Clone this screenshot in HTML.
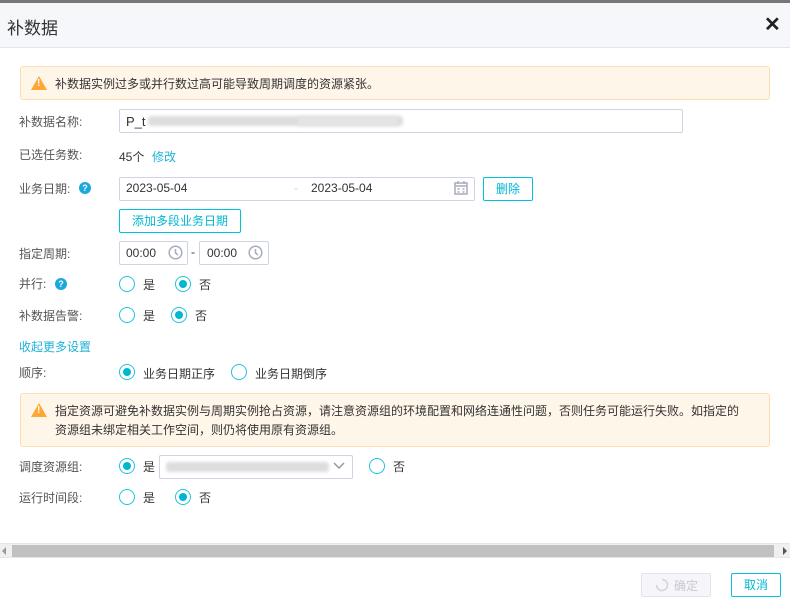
<!DOCTYPE html>
<html><head><meta charset="utf-8"><style>
*{margin:0;padding:0;box-sizing:border-box}
body{width:790px;height:608px;position:relative;background:#fff;font-family:"Liberation Sans","Noto Sans CJK SC",sans-serif;font-size:12px;color:#333;overflow:hidden}
.a{position:absolute;white-space:nowrap}
.lbl{position:absolute;left:19px;color:#555;font-size:12px;line-height:14px}
.inp{position:absolute;border:1px solid #cfd3e3;border-radius:2px;background:#fff}
.rad{position:absolute;width:16px;height:16px;border:1px solid #1fc4dc;border-radius:50%;background:#fff}
.rad.on::after{content:"";position:absolute;left:3px;top:3px;width:8px;height:8px;border-radius:50%;background:#00b7d3}
.btn{position:absolute;border:1px solid #00c1de;border-radius:2px;color:#00b7d3;text-align:center;background:#fff}
.warn{position:absolute;left:20px;width:750px;background:#fff6ea;border:1px solid #fddcb0;border-radius:3px}
.tri{position:absolute;width:0;height:0;border-left:8px solid transparent;border-right:8px solid transparent;border-bottom:14px solid #ffa633}
.tri::after{content:"!";position:absolute;left:-2px;top:2px;color:#fff;font-size:10px;font-weight:bold}
.q{position:absolute;width:12px;height:12px;border-radius:50%;background:#1aa8dd;color:#fff;font-size:9px;font-weight:bold;text-align:center;line-height:12px}
.blur{position:absolute;height:10px;background:#ddd;border-radius:3px;filter:blur(1.5px)}
</style></head><body>
<div class="a" style="left:0;top:0;width:790px;height:3px;background:#777"></div>
<div class="a" style="left:0;top:3px;width:790px;height:45px;background:#f6f7fa;border-bottom:1px solid #e3e5ee"></div>
<div class="a" style="left:7px;top:14px;font-size:17px;color:#333">补数据</div>
<div class="a" style="left:764px;top:12px;font-size:20px;font-weight:bold;color:#222">✕</div>

<div class="warn" style="top:66px;height:34px"></div>
<div class="tri" style="left:31px;top:76px"></div>
<div class="a" style="left:55px;top:75px;color:#333">补数据实例过多或并行数过高可能导致周期调度的资源紧张。</div>

<div class="lbl" style="top:115px">补数据名称:</div>
<div class="inp" style="left:119px;top:109px;width:564px;height:24px"></div>
<div class="a" style="left:126px;top:114px;font-size:13px">P_t</div>
<div class="blur" style="left:148px;top:116px;width:255px"></div>
<div class="blur" style="left:298px;top:116px;width:100px;background:#e4e4e4"></div>

<div class="lbl" style="top:148px">已选任务数:</div>
<div class="a" style="left:119px;top:148px">45个</div>
<div class="a" style="left:152px;top:148px;color:#1cb3d6">修改</div>

<div class="lbl" style="top:182px">业务日期:</div>
<div class="q" style="left:79px;top:182px">?</div>
<div class="inp" style="left:119px;top:177px;width:356px;height:24px"></div>
<div class="a" style="left:126px;top:181px;font-size:12px">2023-05-04</div>
<div class="a" style="left:294px;top:181px;color:#ccc">-</div>
<div class="a" style="left:311px;top:181px;font-size:12px">2023-05-04</div>
<svg class="a" style="left:454px;top:181px" width="14" height="14" viewBox="0 0 14 14"><rect x="1" y="2" width="12" height="11" fill="none" stroke="#a8acbd" stroke-width="1.5"/><path d="M1 5h12M4 0v3M10 0v3M3.5 8h2M8.5 8h2M3.5 11h2M8.5 11h2" stroke="#a8acbd" stroke-width="1.4"/></svg>
<div class="btn" style="left:483px;top:177px;width:50px;height:24px;line-height:22px">删除</div>
<div class="btn" style="left:119px;top:209px;width:122px;height:24px;line-height:22px">添加多段业务日期</div>

<div class="lbl" style="top:247px">指定周期:</div>
<div class="inp" style="left:119px;top:241px;width:69px;height:24px"></div>
<div class="a" style="left:126px;top:246px">00:00</div>
<svg class="a" style="left:168px;top:245px" width="15" height="15"><circle cx="7.5" cy="7.5" r="6.3" fill="none" stroke="#a8acbd" stroke-width="1.5"/><path d="M7.5 4v4l2.5 2" fill="none" stroke="#a8acbd" stroke-width="1.5"/></svg>
<div class="a" style="left:191px;top:245px">-</div>
<div class="inp" style="left:199px;top:241px;width:70px;height:24px"></div>
<div class="a" style="left:207px;top:246px">00:00</div>
<svg class="a" style="left:248px;top:245px" width="15" height="15"><circle cx="7.5" cy="7.5" r="6.3" fill="none" stroke="#a8acbd" stroke-width="1.5"/><path d="M7.5 4v4l2.5 2" fill="none" stroke="#a8acbd" stroke-width="1.5"/></svg>

<div class="lbl" style="top:277px">并行:</div>
<div class="q" style="left:55px;top:278px">?</div>
<div class="rad" style="left:119px;top:276px"></div><div class="a" style="left:143px;top:276px">是</div>
<div class="rad on" style="left:175px;top:276px"></div><div class="a" style="left:199px;top:276px">否</div>

<div class="lbl" style="top:309px">补数据告警:</div>
<div class="rad" style="left:119px;top:307px"></div><div class="a" style="left:143px;top:307px">是</div>
<div class="rad on" style="left:171px;top:307px"></div><div class="a" style="left:195px;top:307px">否</div>

<div class="a" style="left:19px;top:338px;color:#1cb3d6">收起更多设置</div>

<div class="lbl" style="top:366px">顺序:</div>
<div class="rad on" style="left:119px;top:364px"></div><div class="a" style="left:143px;top:365px">业务日期正序</div>
<div class="rad" style="left:231px;top:364px"></div><div class="a" style="left:255px;top:365px">业务日期倒序</div>

<div class="warn" style="top:393px;height:54px"></div>
<div class="tri" style="left:31px;top:403px"></div>
<div class="a" style="left:55px;top:402px;line-height:19px">指定资源可避免补数据实例与周期实例抢占资源，请注意资源组的环境配置和网络连通性问题，否则任务可能运行失败。如指定的<br>资源组未绑定相关工作空间，则仍将使用原有资源组。</div>

<div class="lbl" style="top:460px">调度资源组:</div>
<div class="rad on" style="left:119px;top:458px"></div><div class="a" style="left:143px;top:458px">是</div>
<div class="inp" style="left:159px;top:455px;width:194px;height:24px"></div>
<div class="blur" style="left:166px;top:462px;width:163px"></div>
<svg class="a" style="left:333px;top:462px" width="12" height="8"><path d="M1 1l5 5 5-5" fill="none" stroke="#999" stroke-width="1.5"/></svg>
<div class="rad" style="left:369px;top:458px"></div><div class="a" style="left:393px;top:458px">否</div>

<div class="lbl" style="top:491px">运行时间段:</div>
<div class="rad" style="left:119px;top:489px"></div><div class="a" style="left:143px;top:489px">是</div>
<div class="rad on" style="left:175px;top:489px"></div><div class="a" style="left:199px;top:489px">否</div>

<div class="a" style="left:0;top:543px;width:790px;height:15px;background:#f0f0f0;border-top:1px solid #e6e6e6;border-bottom:1px solid #e6e6e6"></div>
<div class="a" style="left:12px;top:545px;width:762px;height:12px;background:#c1c1c1"></div>
<div class="a" style="left:2px;top:547px;width:0;height:0;border-top:4px solid transparent;border-bottom:4px solid transparent;border-right:4px solid #999"></div>
<div class="a" style="left:783px;top:547px;width:0;height:0;border-top:4px solid transparent;border-bottom:4px solid transparent;border-left:4px solid #555"></div>

<div class="a" style="left:641px;top:573px;width:70px;height:24px;border:1px solid #e2e3ee;background:#f6f6fa;border-radius:2px"></div>
<svg class="a" style="left:655px;top:578px" width="14" height="14"><path d="M7 1.5A5.5 5.5 0 1 1 1.5 7" fill="none" stroke="#d0d2de" stroke-width="1.5"/></svg>
<div class="a" style="left:674px;top:577px;color:#c5c7d3">确定</div>
<div class="btn" style="left:731px;top:573px;width:50px;height:24px;line-height:22px">取消</div>
</body></html>
